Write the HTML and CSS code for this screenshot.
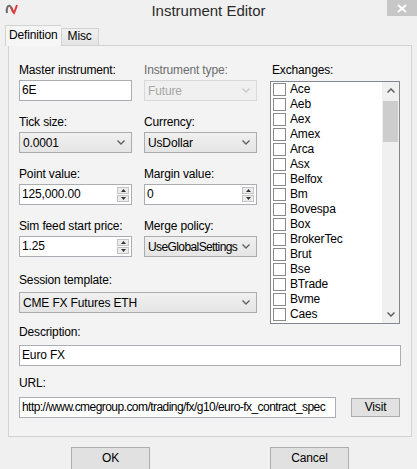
FILE: index.html
```html
<!DOCTYPE html>
<html>
<head>
<meta charset="utf-8">
<title>Instrument Editor</title>
<link rel="stylesheet" href="styles.css">
</head>
<body>
<div class="window">
  <div class="titlebar">
    <div class="logo-box">
      <svg class="logo" width="14" height="12" viewBox="0 0 14 12">
        <path d="M2 10 C1 5 3 2 5 3 C6.5 4 7 7 8 9" fill="none" stroke="#6b6b6b" stroke-width="2"/>
        <path d="M6 4 C7 6 8 9 9 10 C10 8 11 5 12 2" fill="none" stroke="#e23a3a" stroke-width="2"/>
      </svg>
    </div>
    <div class="title">Instrument Editor</div>
    <div class="close">
      <svg width="10" height="9" viewBox="0 0 10 9"><path d="M1 1 L9 8 M9 1 L1 8" stroke="#fff" stroke-width="2"/></svg>
    </div>
  </div>

  <div class="tabs">
    <div class="tab active">Definition</div>
    <div class="tab">Misc</div>
  </div>

  <div class="panel">
    <div class="top">
      <div class="fields">
        <div class="field">
          <div class="label">Master instrument:</div>
          <div class="textbox">6E</div>
        </div>
        <div class="field">
          <div class="label disabled-label">Instrument type:</div>
          <div class="combo disabled"><span class="val">Future</span><svg class="chev" width="8" height="5" viewBox="0 0 8 5"><path d="M0.5 0.5 L4 4 L7.5 0.5" fill="none" stroke="#c8c8c8" stroke-width="1.4"/></svg></div>
        </div>
        <div class="field">
          <div class="label">Tick size:</div>
          <div class="combo"><span class="val">0.0001</span><svg class="chev" width="8" height="5" viewBox="0 0 8 5"><path d="M0.5 0.5 L4 4 L7.5 0.5" fill="none" stroke="#606060" stroke-width="1.4"/></svg></div>
        </div>
        <div class="field">
          <div class="label">Currency:</div>
          <div class="combo"><span class="val">UsDollar</span><svg class="chev" width="8" height="5" viewBox="0 0 8 5"><path d="M0.5 0.5 L4 4 L7.5 0.5" fill="none" stroke="#606060" stroke-width="1.4"/></svg></div>
        </div>
        <div class="field">
          <div class="label">Point value:</div>
          <div class="textbox spinbox"><span class="val">125,000.00</span>
            <div class="spin">
              <div class="spin-btn"><svg width="7" height="4" viewBox="0 0 7 4"><path d="M0 4 L3.5 0 L7 4 Z" fill="#333"/></svg></div>
              <div class="spin-btn"><svg width="7" height="4" viewBox="0 0 7 4"><path d="M0 0 L3.5 4 L7 0 Z" fill="#333"/></svg></div>
            </div>
          </div>
        </div>
        <div class="field">
          <div class="label">Margin value:</div>
          <div class="textbox spinbox"><span class="val">0</span>
            <div class="spin">
              <div class="spin-btn"><svg width="7" height="4" viewBox="0 0 7 4"><path d="M0 4 L3.5 0 L7 4 Z" fill="#333"/></svg></div>
              <div class="spin-btn"><svg width="7" height="4" viewBox="0 0 7 4"><path d="M0 0 L3.5 4 L7 0 Z" fill="#333"/></svg></div>
            </div>
          </div>
        </div>
        <div class="field">
          <div class="label">Sim feed start price:</div>
          <div class="textbox spinbox"><span class="val">1.25</span>
            <div class="spin">
              <div class="spin-btn"><svg width="7" height="4" viewBox="0 0 7 4"><path d="M0 4 L3.5 0 L7 4 Z" fill="#333"/></svg></div>
              <div class="spin-btn"><svg width="7" height="4" viewBox="0 0 7 4"><path d="M0 0 L3.5 4 L7 0 Z" fill="#333"/></svg></div>
            </div>
          </div>
        </div>
        <div class="field">
          <div class="label">Merge policy:</div>
          <div class="combo"><span class="val narrow">UseGlobalSettings</span><svg class="chev" width="8" height="5" viewBox="0 0 8 5"><path d="M0.5 0.5 L4 4 L7.5 0.5" fill="none" stroke="#606060" stroke-width="1.4"/></svg></div>
        </div>
        <div class="field wide session">
          <div class="label">Session template:</div>
          <div class="combo"><span class="val">CME FX Futures ETH</span><svg class="chev" width="8" height="5" viewBox="0 0 8 5"><path d="M0.5 0.5 L4 4 L7.5 0.5" fill="none" stroke="#606060" stroke-width="1.4"/></svg></div>
        </div>
      </div>

      <div class="exchanges">
        <div class="label ex-label">Exchanges:</div>
        <div class="listbox">
          <div class="items">
            <div class="item"><span class="check"></span>Ace</div>
            <div class="item"><span class="check"></span>Aeb</div>
            <div class="item"><span class="check"></span>Aex</div>
            <div class="item"><span class="check"></span>Amex</div>
            <div class="item"><span class="check"></span>Arca</div>
            <div class="item"><span class="check"></span>Asx</div>
            <div class="item"><span class="check"></span>Belfox</div>
            <div class="item"><span class="check"></span>Bm</div>
            <div class="item"><span class="check"></span>Bovespa</div>
            <div class="item"><span class="check"></span>Box</div>
            <div class="item"><span class="check"></span>BrokerTec</div>
            <div class="item"><span class="check"></span>Brut</div>
            <div class="item"><span class="check"></span>Bse</div>
            <div class="item"><span class="check"></span>BTrade</div>
            <div class="item"><span class="check"></span>Bvme</div>
            <div class="item"><span class="check"></span>Caes</div>
          </div>
          <div class="scrollbar">
            <div class="sb-arrow"><svg width="8" height="5" viewBox="0 0 8 5"><path d="M0.5 4.5 L4 1 L7.5 4.5" fill="none" stroke="#606060" stroke-width="1.5"/></svg></div>
            <div class="sb-track"><div class="sb-thumb"></div></div>
            <div class="sb-arrow"><svg width="8" height="5" viewBox="0 0 8 5"><path d="M0.5 0.5 L4 4 L7.5 0.5" fill="none" stroke="#606060" stroke-width="1.5"/></svg></div>
          </div>
        </div>
      </div>
    </div>

    <div class="label desc-label">Description:</div>
    <div class="textbox full">Euro FX</div>

    <div class="label url-label">URL:</div>
    <div class="url-row">
      <div class="textbox url">http://www.cmegroup.com/trading/fx/g10/euro-fx_contract_spec</div>
      <div class="button visit">Visit</div>
    </div>
  </div>

  <div class="footer">
    <div class="button big">OK</div>
    <div class="button big">Cancel</div>
  </div>
</div>
</body>
</html>
```

FILE: styles.css
```css
* { box-sizing: border-box; }

html, body {
  margin: 0;
  padding: 0;
  background: #f0f0f0;
}

.window {
  width: 417px;
  height: 469px;
  overflow: hidden;
  background: #f0f0f0;
  font-family: "Liberation Sans", Arial, sans-serif;
  font-size: 12px;
  letter-spacing: -0.15px;
  color: #000;
}

/* title bar */
.titlebar {
  height: 25px;
  display: flex;
  align-items: flex-start;
}

.logo-box {
  width: 30px;
  padding: 3px 0 0 5px;
}

.logo { display: block; }

.title {
  flex: 1;
  text-align: center;
  font-size: 15px;
  line-height: 22px;
  letter-spacing: 0;
  color: #2b2b2b;
}

.close {
  width: 30px;
  height: 16px;
  background: #c7c7c7;
  display: flex;
  align-items: center;
  justify-content: center;
}

/* tabs */
.tabs {
  display: flex;
  align-items: flex-end;
  height: 20px;
  padding-left: 5px;
  position: relative;
  z-index: 1;
}

.tab {
  height: 17px;
  line-height: 15px;
  padding: 0 6px;
  border: 1px solid #d2d2d2;
  border-bottom: none;
  background: linear-gradient(#f0f0f0, #e4e4e4);
}

.tab.active {
  height: 21px;
  line-height: 19px;
  padding: 0 3px;
  margin-bottom: -1px;
  background: #f6f6f6;
  border-right: none;
}

/* panel */
.panel {
  margin-left: 8px;
  width: 404px;
  height: 392px;
  border: 1px solid #d2d2d2;
  background: #f3f3f3;
  padding: 16px 10px 0 10px;
}

.top {
  display: flex;
  align-items: flex-start;
}

.fields {
  display: grid;
  grid-template-columns: 113px 113px;
  column-gap: 12px;
  row-gap: 13px;
  width: 238px;
}

.field {
  display: flex;
  flex-direction: column;
}

.field.wide { grid-column: 1 / 3; }
.field.session { margin-top: 2px; }
.field.session .label { margin-bottom: 4px; }

.label {
  height: 16px;
  line-height: 16px;
  margin-bottom: 2px;
  color: #000;
  white-space: nowrap;
}

.disabled-label { color: #6d6d6d; }

.textbox {
  height: 21px;
  border: 1px solid #abadb3;
  background: #fff;
  padding-left: 2px;
  line-height: 19px;
  white-space: nowrap;
  overflow: hidden;
}

.spinbox {
  display: flex;
  align-items: center;
  padding-right: 2px;
}

.spinbox .val { flex: 1; }

.spin {
  display: flex;
  flex-direction: column;
  gap: 1px;
  width: 12px;
}

.spin-btn {
  height: 7px;
  border: 1px solid #c3c3c3;
  background: #ececec;
  display: flex;
  align-items: center;
  justify-content: center;
}

.spin-btn svg { display: block; width: 5px; height: 3px; }

.combo {
  height: 21px;
  border: 1px solid #acacac;
  background: linear-gradient(#f0f0f0, #e5e5e5);
  padding: 0 6px 0 3px;
  display: flex;
  align-items: center;
  justify-content: space-between;
  white-space: nowrap;
}

.combo .narrow { letter-spacing: -0.6px; }

.combo.disabled {
  border-color: #d9d9d9;
  background: #f0f0f0;
  color: #a6a6a6;
}

.chev { display: block; flex: none; }

/* exchanges list */
.exchanges {
  margin-left: 13px;
  width: 130px;
}

.ex-label {
  padding-left: 2px;
  margin-bottom: 3px;
}

.listbox {
  height: 243px;
  border: 1px solid #828790;
  background: #fff;
  display: flex;
}

.items {
  flex: 1;
  overflow: hidden;
}

.item {
  height: 15px;
  line-height: 15px;
  display: flex;
  align-items: center;
  padding-left: 2px;
  white-space: nowrap;
}

.check {
  width: 13px;
  height: 13px;
  border: 1px solid #8a8a8a;
  background: #fff;
  margin-right: 4px;
  flex: none;
}

.scrollbar {
  width: 17px;
  display: flex;
  flex-direction: column;
  background: #f0f0f0;
}

.sb-arrow {
  height: 17px;
  display: flex;
  align-items: center;
  justify-content: center;
}

.sb-track {
  flex: 1;
  padding: 2px 1px;
}

.sb-thumb {
  height: 41px;
  background: #cdcdcd;
}

/* description / url */
.desc-label { margin-bottom: 5px; }

.textbox.full { width: 382px; }

.url-label { margin-top: 9px; margin-bottom: 6px; }

.url-row {
  display: flex;
  align-items: center;
}

.textbox.url {
  width: 317px;
  padding-left: 2px;
  letter-spacing: -0.55px;
}

.button {
  border: 1px solid #adadad;
  background: #e1e1e1;
  text-align: center;
}

.visit {
  margin-left: 15px;
  width: 49px;
  height: 19px;
  line-height: 17px;
}

/* footer */
.footer {
  display: flex;
  padding-top: 10px;
  padding-left: 71px;
  gap: 120px;
}

.button.big {
  width: 79px;
  height: 23px;
  line-height: 21px;
}
```
